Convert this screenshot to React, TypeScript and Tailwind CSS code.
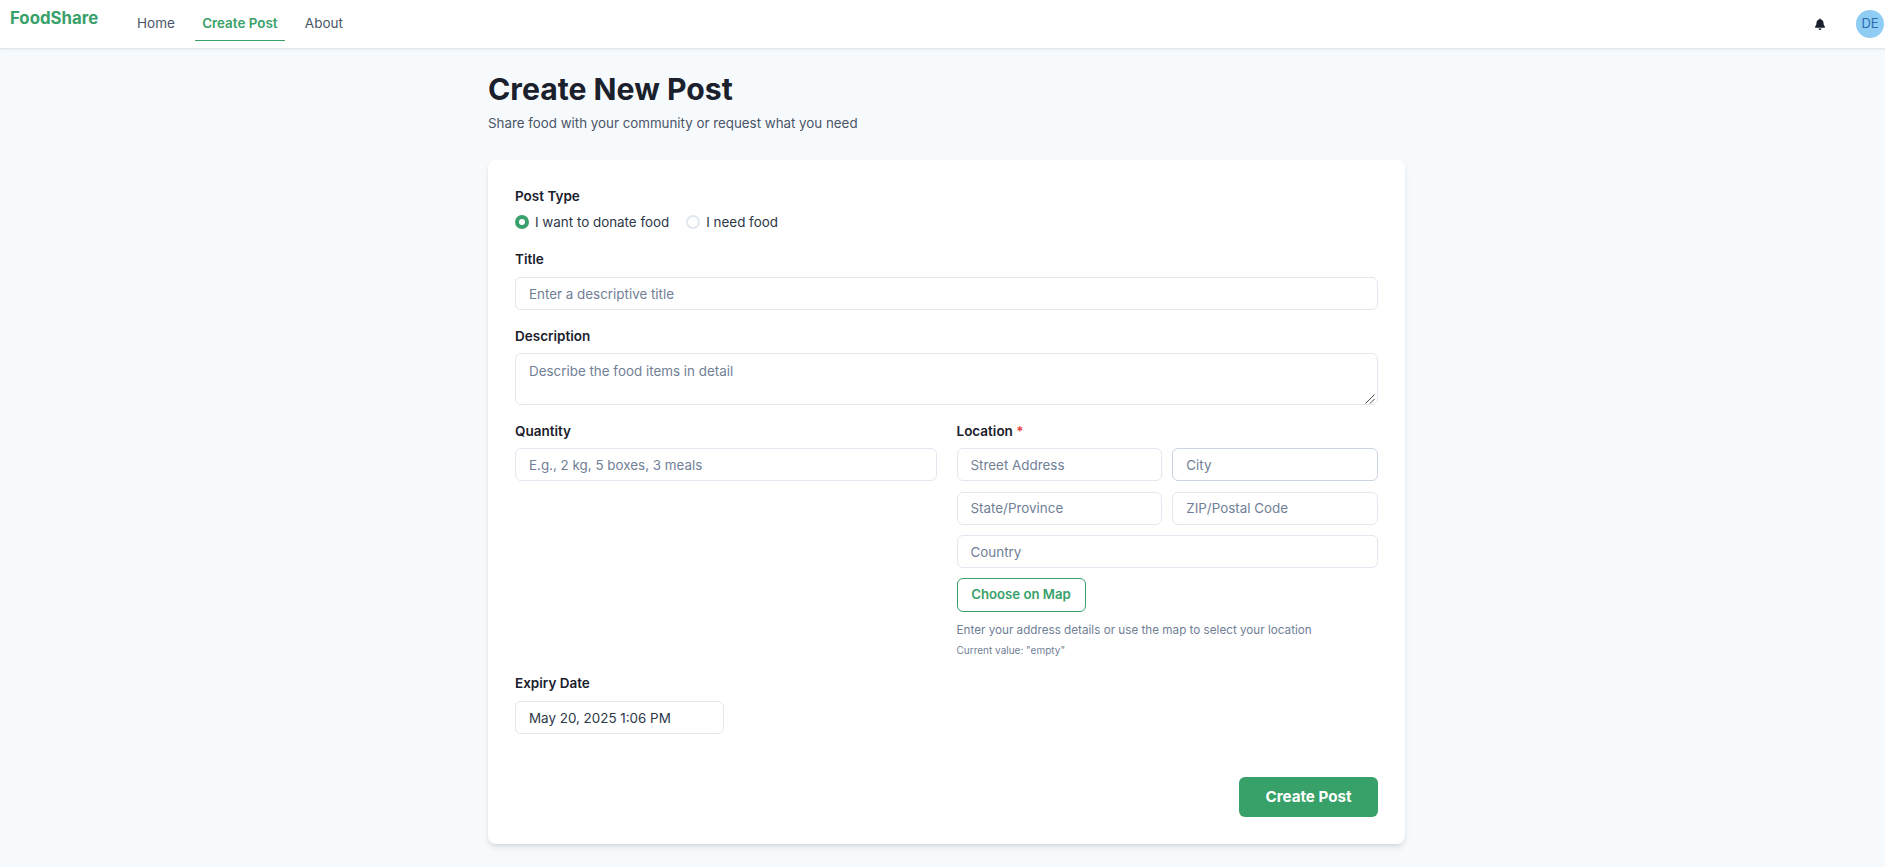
import React from "react";

const inputCls =
  "w-full h-[33px] rounded-[6px] border border-[#E2E8F0] bg-white px-[13px] text-[13.4px] text-[#1A202C] placeholder:text-[#718096] outline-none";

function Label({ children }: { children: React.ReactNode }) {
  return <div className="text-[13.5px] leading-[20px] font-semibold text-[#1A202C]">{children}</div>;
}

function Radio({ checked, label }: { checked?: boolean; label: string }) {
  return (
    <label className="flex items-center gap-[6px]">
      {checked ? (
        <span className="flex h-[14px] w-[14px] items-center justify-center rounded-full bg-[#38A169]">
          <span className="h-[6px] w-[6px] rounded-full bg-white" />
        </span>
      ) : (
        <span className="h-[14px] w-[14px] rounded-full border-2 border-[#E2E8F0] bg-white" />
      )}
      <span className="text-[13.4px] leading-[20px] text-[#2D3748]">{label}</span>
    </label>
  );
}

export default function App() {
  return (
    <div className="min-h-[867px] bg-[#F7FAFC] font-['Inter',sans-serif] text-[#1A202C]">
      <nav className="flex h-[49px] items-stretch border-b border-[#E2E8F0] bg-white shadow-[0_1px_2px_rgba(0,0,0,0.05)]">
        <div className="ml-[10px] mt-[6px] w-[127px] text-[16.8px] leading-[24px] font-bold text-[#38A169]">FoodShare</div>
        <a className="mt-[13px] text-[13.5px] leading-[20px] font-normal text-[#4A5568]">Home</a>
        <a className="ml-[20px] flex h-[41px] w-[90px] justify-center border-b border-[#38A169] pt-[13px] text-[13.4px] leading-[20px] font-semibold text-[#38A169]">
          Create Post
        </a>
        <a className="ml-[20px] mt-[13px] text-[13.5px] leading-[20px] font-normal text-[#4A5568]">About</a>
        <div className="ml-auto mr-[1px] flex items-center gap-[30px] self-start pt-[10px]">
          <svg viewBox="0 0 24 24" className="h-[12px] w-[12px] fill-[#1A202C]">
            <path d="M12 24a3 3 0 0 0 3-3H9a3 3 0 0 0 3 3Zm9.7-7c-.9-1-2.7-2.5-2.7-7.3 0-3.6-2.6-6.5-6-7.3V1.5a1 1 0 1 0-2 0v.9c-3.4.8-6 3.7-6 7.3 0 4.8-1.8 6.3-2.7 7.3-.3.3-.4.6-.4 1 0 .8.6 1.5 1.5 1.5h17.2c.9 0 1.5-.7 1.5-1.5 0-.4-.1-.7-.4-1Z" />
          </svg>
          <div className="flex h-[28px] w-[28px] items-center justify-center rounded-full bg-[#90CDF4] text-[13px] font-normal text-[#2B6CB0]">DE</div>
        </div>
      </nav>

      <main className="ml-[488px] w-[917px] pt-[22px]">
        <h1 className="text-[30.2px] leading-[36px] font-bold text-[#1A202C]">Create New Post</h1>
        <p className="mt-[6px] text-[13.33px] leading-[20px] text-[#4A5568]">Share food with your community or request what you need</p>

        <form className="mt-[27px] flex h-[684px] flex-col rounded-[8px] bg-white px-[27px] pt-[26px] shadow-[0_4px_6px_-1px_rgba(0,0,0,0.1),0_2px_4px_-1px_rgba(0,0,0,0.06)]">
          <Label>Post Type</Label>
          <div className="mt-[6px] flex gap-[17px]">
            <Radio checked label="I want to donate food" />
            <Radio label="I need food" />
          </div>

          <div className="mt-[17px]">
            <Label>Title</Label>
          </div>
          <input className={`${inputCls} mt-[8px]`} placeholder="Enter a descriptive title" />

          <div className="mt-[16px]">
            <Label>Description</Label>
          </div>
          <div className="relative mt-[7px] h-[52px]">
            <textarea className={`${inputCls} !h-[52px] resize-none pt-[7px] leading-[20px]`} placeholder="Describe the food items in detail" />
            <svg viewBox="0 0 10 10" className="absolute bottom-[1px] right-[3px] h-[10px] w-[10px] stroke-[#4A4A4A]" fill="none" strokeWidth="1">
              <path d="M0.5 9.5 9.5 0.5M5 9.5 9.5 5" />
            </svg>
          </div>

          <div className="mt-[16px] grid grid-cols-2 gap-[20px]">
            <div>
              <Label>Quantity</Label>
              <input className={`${inputCls} mt-[7px]`} placeholder="E.g., 2 kg, 5 boxes, 3 meals" />
            </div>
            <div>
              <Label>
                Location <span className="text-[#E53E3E]">*</span>
              </Label>
              <div className="mt-[7px] grid grid-cols-2 gap-x-[10px] gap-y-[10.5px]">
                <input className={inputCls} placeholder="Street Address" />
                <input className={`${inputCls} !border-[#CBD5E0]`} placeholder="City" />
                <input className={inputCls} placeholder="State/Province" />
                <input className={inputCls} placeholder="ZIP/Postal Code" />
                <input className={`${inputCls} col-span-2`} placeholder="Country" />
              </div>
              <button type="button" className="mt-[10px] block h-[34px] w-[129px] rounded-[6px] border border-[#38A169] text-[13.2px] font-semibold text-[#38A169]">
                Choose on Map
              </button>
              <p className="mt-[9px] text-[11.7px] leading-[18px] text-[#718096]">Enter your address details or use the map to select your location</p>
              <p className="mt-[4px] text-[10px] leading-[14px] text-[#718096]">Current value: "empty"</p>
            </div>
          </div>

          <div className="mt-[16px]">
            <Label>Expiry Date</Label>
          </div>
          <input className={`${inputCls} mt-[8px] !w-[209px] !text-[#2D3748]`} defaultValue="May 20, 2025 1:06 PM" />

          <div className="mt-[43px] flex justify-end">
            <button type="button" className="h-[40px] w-[139px] rounded-[6px] bg-[#38A169] text-[15.2px] font-bold text-white">
              Create Post
            </button>
          </div>
        </form>
      </main>
    </div>
  );
}
